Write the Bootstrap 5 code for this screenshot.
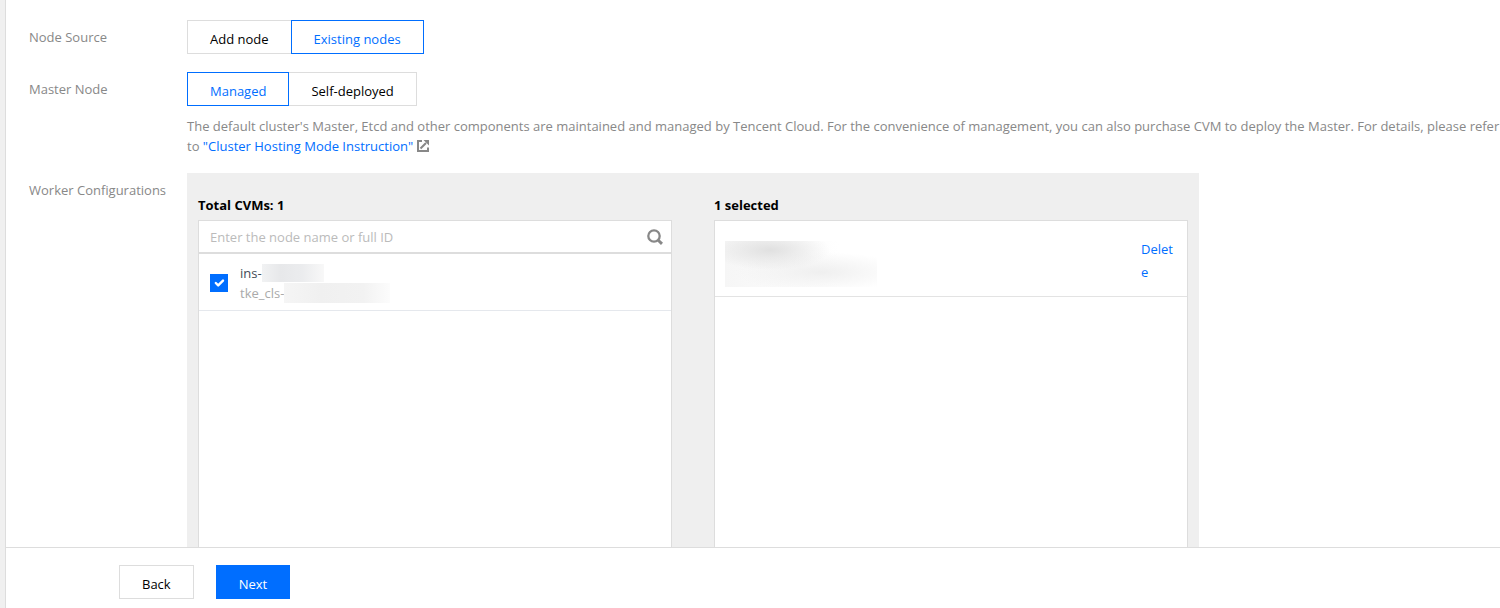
<!DOCTYPE html>
<html lang="en">
<head>
<meta charset="utf-8">
<meta name="viewport" content="width=device-width, initial-scale=1">
<title>Create Cluster</title>
<link href="https://cdn.jsdelivr.net/npm/bootstrap@5.3.0/dist/css/bootstrap.min.css" rel="stylesheet">
<style>
  :root { --accent: #006eff; --line: #ddd; --muted: #888; }
  body { font-family: "Open Sans", "Noto Sans", sans-serif; font-size: 13px; line-height: 20px; color: #000; background: #f0f0f0; }
  a { color: var(--accent); text-decoration: none; }
  .page { height: 100vh; margin-left: 5px; border-left: 1px solid var(--line); background: #fff; }
  .form-area { padding: 20px 0 0 23px; min-height: 0; }
  .field-label { width: 158px; color: var(--muted); padding-top: 7px; }
  .form-row-gap { margin-bottom: 18px; }
  .btn { --bs-btn-font-size: 13px; --bs-btn-line-height: 20px; --bs-btn-padding-x: 22px; --bs-btn-border-radius: 0;
    height: 34px; padding-top: 8px; padding-bottom: 4px; }
  .btn-plain { --bs-btn-color: #000; --bs-btn-bg: #fff; --bs-btn-border-color: var(--line);
    --bs-btn-hover-color: #000; --bs-btn-hover-bg: #f7f7f7; --bs-btn-hover-border-color: var(--line);
    --bs-btn-active-color: var(--accent); --bs-btn-active-bg: #fff; --bs-btn-active-border-color: var(--accent); }
  .btn-accent { --bs-btn-color: #fff; --bs-btn-bg: var(--accent); --bs-btn-border-color: var(--accent);
    --bs-btn-hover-color: #fff; --bs-btn-hover-bg: #0063e6; --bs-btn-hover-border-color: #0063e6; }
  .hint { color: var(--muted); margin: 10px 0 17px; }
  .hint svg { vertical-align: -1px; }
  .transfer { max-width: 1012px; background: #efefef; padding: 22px 11px 24px; column-gap: 42px; }
  .pane-title { font-size: 13px; line-height: 20px; font-weight: 700; margin-bottom: 5px; }
  .pane { height: 400px; background: #fff; border: 1px solid var(--line); }
  .search-bar { border-bottom: 2px solid var(--line); padding-right: 8px; height: 33px; }
  .search-bar .form-control { font-size: 13px; line-height: 20px; padding: 6px 11px; background: transparent; color: #000; }
  .search-bar .form-control::placeholder { color: #bbb; }
  .node-row { border-bottom: 1px solid #e5e8ed; padding: 9px 11px 7px; column-gap: 12px; }
  .node-row .form-check-input { width: 18px; height: 18px; border-radius: 0; margin: 0; border-color: var(--line); }
  .node-row .form-check-input:checked { background-color: var(--accent); border-color: var(--accent); }
  .node-id { color: #444c57; }
  .node-name { color: #aaa; }
  .mask-id { width: 62px; height: 18px; background: linear-gradient(90deg, #f1f2f3, #e7e8ea 30%, #ebecee 65%, #f8f8f8); }
  .mask-name { width: 106px; height: 20px; background: linear-gradient(90deg, #f5f5f5, #f0f0f0 35%, #f2f2f2 75%, #fcfcfc); }
  .picked-row { border-bottom: 1px solid #e3e3e3; padding: 17px 14px 9px 10px; }
  .mask-picked { width: 152px; height: 46px; margin-top: 3px;
    background: radial-gradient(ellipse 60px 20px at 45px 9px, #e0e0e0, transparent),
      radial-gradient(ellipse 85px 20px at 95px 31px, #efefef, transparent),
      linear-gradient(90deg, #f6f6f6, #fff 75%); }
  .delete-link { width: 32px; line-height: 23px; word-break: break-all; }
  .actions { border-top: 1px solid var(--line); padding: 17px 0 9px 113px; column-gap: 22px; background: #fff; }
</style>
</head>
<body>
<div class="page d-flex flex-column">
  <main class="form-area flex-grow-1 overflow-hidden">
    <div class="d-flex form-row-gap" role="group" aria-labelledby="source-label">
      <div class="field-label flex-shrink-0" id="source-label">Node Source</div>
      <div class="btn-group">
        <input type="radio" class="btn-check" name="source" id="source-add">
        <label class="btn btn-plain" for="source-add">Add node</label>
        <input type="radio" class="btn-check" name="source" id="source-existing" checked>
        <label class="btn btn-plain" for="source-existing">Existing nodes</label>
      </div>
    </div>
    <div class="d-flex" role="group" aria-labelledby="master-label">
      <div class="field-label flex-shrink-0" id="master-label">Master Node</div>
      <div>
        <div class="btn-group">
          <input type="radio" class="btn-check" name="master" id="master-managed" checked>
          <label class="btn btn-plain" for="master-managed">Managed</label>
          <input type="radio" class="btn-check" name="master" id="master-self">
          <label class="btn btn-plain" for="master-self">Self-deployed</label>
        </div>
        <p class="hint">The default cluster's Master, Etcd and other components are maintained and managed by Tencent Cloud. For the convenience of management, you can also purchase CVM to deploy the Master. For details, please refer to <a href="#">"Cluster Hosting Mode Instruction"</a>
          <svg width="12" height="12" viewBox="0 0 12 12" fill="none" stroke="#888" stroke-width="2" aria-hidden="true"><path d="M5 1H1v10h10V7.500M3.500 8.500L9 3"/><path d="M6.500 0H12v5.500z" fill="#888" stroke="none"/></svg></p>
      </div>
    </div>
    <div class="d-flex">
      <div class="field-label flex-shrink-0">Worker Configurations</div>
      <div class="transfer d-flex flex-grow-1">
        <section class="col">
          <h2 class="pane-title">Total CVMs: 1</h2>
          <div class="pane">
            <div class="search-bar d-flex align-items-center">
              <input type="text" class="form-control border-0 rounded-0 shadow-none" placeholder="Enter the node name or full ID" aria-label="Enter the node name or full ID">
              <svg class="flex-shrink-0" width="16" height="16" viewBox="0 0 16 16" fill="none" stroke="#888" aria-hidden="true"><circle cx="7" cy="7" r="5.700" stroke-width="2.300"/><path d="M11 11l4 3.800" stroke-width="3"/></svg>
            </div>
            <div class="node-row d-flex align-items-center">
              <input type="checkbox" class="form-check-input flex-shrink-0 shadow-none" id="node-1" checked>
              <label for="node-1">
                <span class="node-id d-flex align-items-center">ins-<span class="mask-id"></span></span>
                <span class="node-name d-flex align-items-center">tke_cls-<span class="mask-name"></span></span>
              </label>
            </div>
          </div>
        </section>
        <section class="col">
          <h2 class="pane-title">1 selected</h2>
          <div class="pane">
            <div class="picked-row d-flex justify-content-between">
              <div class="mask-picked"></div>
              <a href="#" class="delete-link">Delete</a>
            </div>
          </div>
        </section>
      </div>
    </div>
  </main>
  <footer class="actions d-flex flex-shrink-0">
    <button type="button" class="btn btn-plain">Back</button>
    <button type="button" class="btn btn-accent">Next</button>
  </footer>
</div>
<script src="https://cdn.jsdelivr.net/npm/bootstrap@5.3.0/dist/js/bootstrap.bundle.min.js"></script>
</body>
</html>
